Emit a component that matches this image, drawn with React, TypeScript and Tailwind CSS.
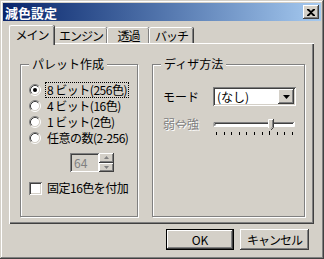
const raised =
  "shadow-[inset_-1px_-1px_#404040,inset_1px_1px_#ffffff,inset_-2px_-2px_#808080]";
const sunken =
  "shadow-[inset_1px_1px_#808080,inset_-1px_-1px_#ffffff,inset_2px_2px_#404040,inset_-2px_-2px_#d4d0c8]";

function Radio({ checked }: { checked?: boolean }) {
  return (
    <svg width="12" height="12" viewBox="0 0 12 12" className="shrink-0">
      <circle cx="6" cy="6" r="4.5" fill="#fff" />
      <path d="M2.11 9.89A5.5 5.5 0 0 1 9.89 2.11" fill="none" stroke="#808080" />
      <path d="M9.89 2.11A5.5 5.5 0 0 1 2.11 9.89" fill="none" stroke="#fff" />
      <path d="M2.82 9.18A4.5 4.5 0 0 1 9.18 2.82" fill="none" stroke="#404040" />
      <path d="M9.18 2.82A4.5 4.5 0 0 1 2.82 9.18" fill="none" stroke="#d4d0c8" />
      {checked && <circle cx="6" cy="6" r="2" fill="#000" />}
    </svg>
  );
}

function GroupBox({
  label,
  className,
  children,
}: {
  label: string;
  className: string;
  children: React.ReactNode;
}) {
  return (
    <div
      className={`relative border border-[#808080] shadow-[inset_1px_1px_#ffffff,1px_1px_#ffffff] ${className}`}
    >
      <span className="absolute -top-[9px] left-[8px] bg-[#d4d0c8] px-[3px] leading-[16px]">
        {label}
      </span>
      {children}
    </div>
  );
}

function Tab({ label, active }: { label: string; active?: boolean }) {
  return (
    <div
      className={`flex items-center justify-center rounded-t-[2px] bg-[#d4d0c8] border-l border-t border-white shadow-[inset_-1px_0_#808080,1px_0_#404040] ${
        active ? "relative z-10 h-[20px] -mb-[2px] pb-[2px]" : "h-[16px]"
      }`}
    >
      {label}
    </div>
  );
}

function Slider() {
  const ticks = Array.from({ length: 11 }, (_, i) => 3 + i * 7.6);
  return (
    <svg width="84" height="20" viewBox="0 0 84 20">
      <rect x="1" y="6" width="80" height="4" fill="#fff" />
      <path d="M1 10.5V6.5H81" fill="none" stroke="#808080" />
      <path d="M2 9.5V7.5H80" fill="none" stroke="#404040" />
      <path d="M1 10.5H81.5V6" fill="none" stroke="#fff" />
      {/* thumb */}
      <path d="M55.5 3.5H60.5V11.5L58 14L55.5 11.5Z" fill="#d4d0c8" />
      <path d="M55.5 12V3.5H60" fill="none" stroke="#fff" />
      <path d="M60.5 3V11.5L58 14" fill="none" stroke="#404040" />
      <path d="M59.5 4V11L58 12.5" fill="none" stroke="#808080" />
      {ticks.map((x, i) => (
        <rect
          key={i}
          x={Math.round(x)}
          y={i === 7 ? 15 : 16}
          width="1"
          height={i === 7 ? 4 : 3}
          fill="#000"
        />
      ))}
    </svg>
  );
}

export default function App() {
  return (
    <div className="w-[324px] h-[259px] bg-[#d4d0c8] p-[3px] flex flex-col text-[12px] text-black font-['Noto_Sans_CJK_JP','Noto_Sans',sans-serif] shadow-[inset_-1px_-1px_#404040,inset_1px_1px_#d4d0c8,inset_-2px_-2px_#808080,inset_2px_2px_#ffffff]">
      {/* title bar */}
      <div className="h-[18px] flex items-center justify-between bg-linear-to-r from-[#0a246a] to-[#a6caf0] pl-[2px] pr-[2px]">
        <span className="text-white font-bold text-[13px] leading-none">減色設定</span>
        <div
          className={`w-[16px] h-[14px] bg-[#d4d0c8] flex items-center justify-center ${raised}`}
        >
          <svg width="8" height="7" viewBox="0 0 8 7">
            <path
              d="M0 0H2L4 2L6 0H8V1L5 3.5L8 6V7H6L4 5L2 7H0V6L3 3.5L0 1Z"
              fill="#000"
            />
          </svg>
        </div>
      </div>

      {/* body */}
      <div className="flex-1 flex flex-col pl-[6px] pr-[7px] pt-[4px]">
        <div className="flex items-end h-[18px] text-[12px] tracking-[-1px]">
          <div className="w-[45px]">
            <Tab label="メイン" active />
          </div>
          <div className="w-[53px]">
            <Tab label="エンジン" />
          </div>
          <div className="w-[42px]">
            <Tab label="透過" />
          </div>
          <div className="w-[44px]">
            <Tab label="バッチ" />
          </div>
        </div>

        <div className="h-[181px] flex gap-[14px] pl-[11px] pt-[21px] shadow-[inset_1px_1px_#ffffff,inset_-1px_-1px_#404040,inset_-2px_-2px_#808080]">
          <GroupBox label="パレット作成" className="w-[118px] h-[153px]">
            <div className="flex flex-col pt-[17px] pl-[8px]">
              {[
                ["8 ビット(256色)", true],
                ["4 ビット(16色)", false],
                ["1 ビット(2色)", false],
                ["任意の数(2-256)", false],
              ].map(([t, c]) => (
                <div key={t as string} className="h-[16px] flex items-center gap-[5px]">
                  <Radio checked={c as boolean} />
                  <span
                    className={`leading-[14px] px-[1px] tracking-[-0.5px] whitespace-nowrap ${
                      c ? "outline outline-1 outline-dotted outline-black" : ""
                    }`}
                  >
                    {t as string}
                  </span>
                </div>
              ))}
              <div className="flex ml-[41px] mt-[7px] h-[19px]">
                <div
                  className={`w-[29px] h-[19px] flex items-center pl-[4px] text-[#808080] ${sunken}`}
                >
                  64
                </div>
                <div className="flex flex-col w-[15px] h-[19px] shadow-[inset_0_1px_#808080,inset_0_-1px_#ffffff,inset_-1px_0_#ffffff]">
                  {[0, 1].map((i) => (
                    <div
                      key={i}
                      className={`flex-1 flex items-center justify-center ${raised}`}
                    >
                      <svg width="5" height="3" viewBox="0 0 5 3">
                        <path
                          d={i === 0 ? "M2.5 0L5 3H0Z" : "M0 0H5L2.5 3Z"}
                          fill="#808080"
                        />
                      </svg>
                    </div>
                  ))}
                </div>
              </div>
              <div className="flex items-center gap-[5px] mt-[8px] h-[16px]">
                <div
                  className={`w-[13px] h-[13px] bg-white ${sunken}`}
                />
                <span className="tracking-[-0.5px]">固定16色を付加</span>
              </div>
            </div>
          </GroupBox>

          <GroupBox label="ディザ方法" className="w-[153px] h-[153px]">
            <div className="flex flex-col pt-[22px] pl-[10px]">
              <div className="flex items-center h-[19px]">
                <span className="w-[50px]">モード</span>
                <div
                  className={`w-[83px] h-[19px] bg-white flex items-center justify-between pl-[4px] pr-[2px] ${sunken}`}
                >
                  <span>(なし)</span>
                  <div
                    className={`w-[16px] h-[15px] bg-[#d4d0c8] flex items-center justify-center ${raised}`}
                  >
                    <svg width="7" height="4" viewBox="0 0 7 4">
                      <path d="M0 0H7L3.5 4Z" fill="#000" />
                    </svg>
                  </div>
                </div>
              </div>
              <div className="flex items-start mt-[10px]">
                <span className="w-[50px] text-[#808080] [text-shadow:1px_1px_#ffffff] leading-[16px]">
                  弱⇔強
                </span>
                <Slider />
              </div>
            </div>
          </GroupBox>
        </div>

        <div className="flex justify-end gap-[6px] mt-[5px] pr-[5px]">
          <div className="w-[68px] h-[21px] border border-black">
            <div className={`w-full h-full flex items-center justify-center ${raised}`}>
              OK
            </div>
          </div>
          <div
            className={`w-[69px] h-[21px] flex items-center justify-center tracking-[-1px] ${raised}`}
          >
            キャンセル
          </div>
        </div>
      </div>
    </div>
  );
}
